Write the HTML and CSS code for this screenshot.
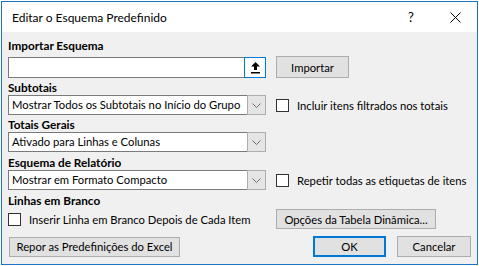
FILE: index.html
```html
<!DOCTYPE html>
<html lang="pt">
<head>
<meta charset="utf-8">
<link rel="stylesheet" href="styles.css">
</head>
<body>
<div class="window">
  <div class="titlebar">
    <span class="title">Editar o Esquema Predefinido</span>
    <span class="tbtn help">?</span>
    <span class="tbtn close">
      <svg width="11" height="11" viewBox="0 0 11 11"><path d="M0.5 0.5 L10.5 10.5 M10.5 0.5 L0.5 10.5" stroke="#000" stroke-width="1" fill="none"/></svg>
    </span>
  </div>
  <div class="content">
    <div class="label l1">Importar Esquema</div>
    <div class="row r1">
      <div class="col-left">
        <div class="filebox">
          <div class="field"></div>
          <div class="upload">
            <svg width="9" height="12" viewBox="0 0 9 12"><path d="M4.5 0 L9 4.5 L6 4.5 L6 8 L3 8 L3 4.5 L0 4.5 Z" fill="#000"/><rect x="0" y="10" width="9" height="1.5" fill="#000"/></svg>
          </div>
        </div>
      </div>
      <div class="col-right"><button class="btn btn-import">Importar</button></div>
    </div>

    <div class="label l2">Subtotais</div>
    <div class="row">
      <div class="col-left">
        <div class="select"><span class="stext">Mostrar Todos os Subtotais no Início do Grupo</span><span class="arrow"><svg width="9" height="5" viewBox="0 0 9 5"><path d="M0.5 0.5 L4.5 4.5 L8.5 0.5" stroke="#6d6d6d" fill="none"/></svg></span></div>
      </div>
      <div class="col-right check"><span class="box"></span><span>Incluir itens filtrados nos totais</span></div>
    </div>

    <div class="label l3">Totais Gerais</div>
    <div class="row">
      <div class="col-left">
        <div class="select"><span class="stext">Ativado para Linhas e Colunas</span><span class="arrow"><svg width="9" height="5" viewBox="0 0 9 5"><path d="M0.5 0.5 L4.5 4.5 L8.5 0.5" stroke="#6d6d6d" fill="none"/></svg></span></div>
      </div>
      <div class="col-right"></div>
    </div>

    <div class="label l4">Esquema de Relatório</div>
    <div class="row">
      <div class="col-left">
        <div class="select"><span class="stext">Mostrar em Formato Compacto</span><span class="arrow"><svg width="9" height="5" viewBox="0 0 9 5"><path d="M0.5 0.5 L4.5 4.5 L8.5 0.5" stroke="#6d6d6d" fill="none"/></svg></span></div>
      </div>
      <div class="col-right check"><span class="box"></span><span>Repetir todas as etiquetas de itens</span></div>
    </div>

    <div class="label l5">Linhas em Branco</div>
    <div class="row r5">
      <div class="col-left check"><span class="box"></span><span>Inserir Linha em Branco Depois de Cada Item</span></div>
      <div class="col-right"><button class="btn btn-opts">Opções da Tabela Dinâmica...</button></div>
    </div>

    <div class="row r6">
      <button class="btn btn-reset">Repor as Predefinições do Excel</button>
      <div class="actions">
        <button class="btn btn-ok">OK</button>
        <button class="btn btn-cancel">Cancelar</button>
      </div>
    </div>
  </div>
</div>
</body>
</html>
```

FILE: styles.css
```css
html, body {
  margin: 0;
  padding: 0;
  background: #ffffff;
}
body {
  font-family: "Lato", "Liberation Sans", sans-serif;
  font-size: 11.25px;
  color: #000;
}
.window {
  margin: 1px;
  width: 475px;
  height: 262px;
  border: 1px solid #1c73c4;
  background: #f0f0f0;
  display: flex;
  flex-direction: column;
}
.titlebar {
  height: 30px;
  background: #fff;
  display: flex;
  align-items: center;
  padding-left: 10px;
  flex: none;
}
.title {
  flex: 1;
  font-size: 12px;
}
.tbtn {
  width: 44px;
  height: 30px;
  display: flex;
  align-items: center;
  justify-content: center;
}
.help {
  font-size: 13px;
}
.content {
  padding: 6px 0 0 6px;
  display: flex;
  flex-direction: column;
}
.label {
  font-weight: bold;
  font-size: 11.75px;
  line-height: 15px;
  height: 15px;
}
.row {
  display: flex;
  align-items: center;
}
.col-left {
  width: 258px;
  flex: none;
}
.col-right {
  margin-left: 10px;
}
.r1 {
  margin-top: 3px;
  height: 22px;
}
.filebox {
  display: flex;
  height: 21px;
  margin-top: 1px;
}
.field {
  flex: 1;
  background: #fff;
  border: 1px solid #7a7a7a;
  border-right: none;
}
.upload {
  width: 20px;
  height: 19px;
  border: 1px solid #0078d7;
  background: #fff;
  display: flex;
  align-items: center;
  justify-content: center;
}
.btn {
  font-family: inherit;
  font-size: 11.25px;
  background: #e1e1e1;
  border: 1px solid #adadad;
  padding: 0;
  margin: 0;
  color: #000;
  height: 21px;
  line-height: 17px;
  white-space: nowrap;
}
.btn-import {
  width: 73px;
  height: 22px;
}
.l2 { margin-top: 2px; }
.l3 { margin-top: 2px; }
.l4 { margin-top: 3px; }
.l5 { margin-top: 3px; }
.select {
  height: 20px;
  box-sizing: border-box;
  border: 1px solid #7a7a7a;
  background: #fff;
  display: flex;
  align-items: stretch;
}
.stext {
  flex: 1;
  padding-left: 3px;
  line-height: 18px;
  white-space: nowrap;
  overflow: hidden;
}
.arrow {
  width: 17px;
  background: #e5e5e5;
  border: 1px solid #adadad;
  margin: -1px -1px -1px 0;
  display: flex;
  align-items: center;
  justify-content: center;
}
.check {
  display: flex;
  align-items: center;
  white-space: nowrap;
}
.box {
  width: 11px;
  height: 11px;
  border: 1px solid #333;
  background: #fff;
  margin-right: 8px;
  flex: none;
}
.r5 {
  margin-top: 1px;
  height: 20px;
}
.btn-opts {
  width: 160px;
  height: 20px;
}
.r6 {
  margin-top: 7px;
  justify-content: space-between;
  padding-right: 6px;
}
.btn-reset {
  width: 171px;
  height: 20px;
  margin-left: 1px;
}
.actions {
  display: flex;
  gap: 11px;
}
.btn-ok {
  width: 73px;
  height: 21px;
  border: 2px solid #0078d7;
}
.btn-cancel {
  width: 74px;
  height: 21px;
}
```
